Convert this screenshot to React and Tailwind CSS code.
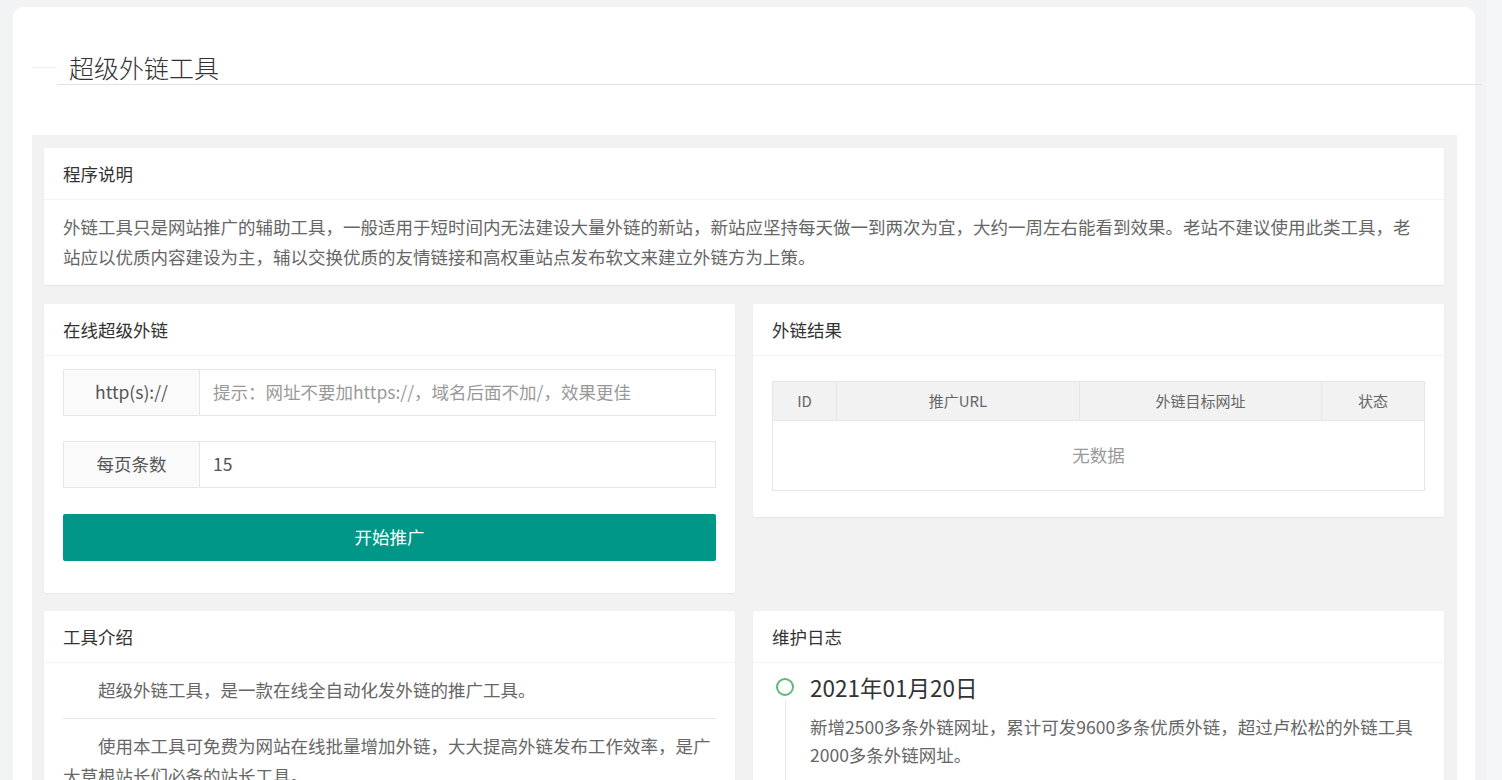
import React from 'react';

const font = { fontFamily: '"Noto Sans CJK SC", "Noto Sans", sans-serif' };

// 卡片：标题 + 内容
const Card = ({ title, children, className = '' }) => (
  <div className={`bg-white rounded-[2px] shadow-[0_1px_2px_0_rgba(0,0,0,0.05)] ${className}`}>
    <div className="h-[52px] leading-[52px] px-[19px] text-[17.5px] text-[#333] border-b border-[#f4f4f4]">
      {title}
    </div>
    {children}
  </div>
);

const InputRow = ({ label, placeholder, value }) => (
  <div className="flex h-[47px]">
    <div className="w-[137px] shrink-0 bg-[#fafafa] border border-[#e6e6e6] flex items-center justify-center text-[17.5px] text-[#555]">
      {label}
    </div>
    <input
      className="flex-1 min-w-0 border border-l-0 border-[#e6e6e6] px-[13px] text-[17.5px] text-[#555] placeholder:text-[#999] outline-none"
      placeholder={placeholder}
      defaultValue={value}
    />
  </div>
);

export default function App() {
  return (
    <div className="min-h-screen bg-[#f2f3f5] flex" style={font}>
      <div className="pl-[13px] pt-[7px] w-[1486px] shrink-0 pr-[11px]">
        <div className="bg-white rounded-[10px] pt-[43px] pb-0">
          {/* 标题 */}
          <div className="flex items-center pl-[19px] mr-[-7px]">
            <div className="w-[25px] h-px bg-[#eeeeee]"></div>
            <div className="flex-1 border-b border-[#e2e2e2] pl-[12px] h-[35px] leading-[34px] text-[25px] font-light text-[#333]">
              超级外链工具
            </div>
          </div>

          <div className="mt-[50px] ml-[19px] mr-[18px] bg-[#f2f2f2] pl-[12px] pr-[13px] pt-[13px] pb-[20px]">
            <Card title="程序说明" className="mb-[19px]">
              <div className="px-[19px] pt-[12px] pb-[13px] text-[17.5px] leading-[30px] text-[#666]">
                外链工具只是网站推广的辅助工具，一般适用于短时间内无法建设大量外链的新站，新站应坚持每天做一到两次为宜，大约一周左右能看到效果。老站不建议使用此类工具，老站应以优质内容建设为主，辅以交换优质的友情链接和高权重站点发布软文来建立外链方为上策。
              </div>
            </Card>

            <div className="grid grid-cols-2 gap-[18px] items-start">
              <Card title="在线超级外链">
                <div className="px-[19px] pt-[13px] pb-[32px] flex flex-col">
                  <InputRow label="http(s)://" placeholder="提示：网址不要加https://，域名后面不加/，效果更佳" />
                  <div className="h-[25px]"></div>
                  <InputRow label="每页条数" value="15" />
                  <button className="mt-[26px] h-[47px] w-full rounded-[2px] bg-[#009688] text-white text-[17.5px]">
                    开始推广
                  </button>
                </div>
              </Card>

              <Card title="外链结果">
                <div className="px-[19px] pt-[25px] pb-[26px]">
                  <div className="border border-[#e6e6e6]">
                    <div className="grid grid-cols-[64px_243px_242px_1fr] h-[39px] bg-[#f2f2f2] border-b border-[#e6e6e6] text-[15px] text-[#666]">
                      <div className="flex items-center justify-center border-r border-[#e6e6e6]">ID</div>
                      <div className="flex items-center justify-center border-r border-[#e6e6e6]">推广URL</div>
                      <div className="flex items-center justify-center border-r border-[#e6e6e6]">外链目标网址</div>
                      <div className="flex items-center justify-center">状态</div>
                    </div>
                    <div className="h-[69px] flex items-center justify-center text-[17.5px] text-[#999]">
                      无数据
                    </div>
                  </div>
                </div>
              </Card>

              <Card title="工具介绍">
                <div className="px-[19px] pt-[12px] pb-[12px] text-[17.5px] leading-[30px] text-[#666]">
                  <p className="indent-[2em]">超级外链工具，是一款在线全自动化发外链的推广工具。</p>
                  <hr className="mt-[13px] mb-[12px] border-0 h-px bg-[#e6e6e6]" />
                  <p className="indent-[2em]">使用本工具可免费为网站在线批量增加外链，大大提高外链发布工作效率，是广大草根站长们必备的站长工具。</p>
                </div>
              </Card>

              <Card title="维护日志">
                <div className="px-[19px] pt-[9px] pb-[12px] flex">
                  <div className="w-[26px] shrink-0 flex flex-col items-center pt-[6px]">
                    <div className="w-[18px] h-[18px] rounded-full border-2 border-[#5FB878]"></div>
                    <div className="flex-1 w-px bg-[#e6e6e6] mt-[5px]"></div>
                  </div>
                  <div className="ml-[12px] pb-[20px]">
                    <div className="text-[22.5px] leading-[30px] text-[#333]">2021年01月20日</div>
                    <p className="mt-[11px] text-[17.5px] leading-[28px] text-[#666]">
                      新增2500多条外链网址，累计可发9600多条优质外链，超过卢松松的外链工具2000多条外链网址。
                    </p>
                  </div>
                </div>
              </Card>
            </div>
          </div>
        </div>
      </div>
      <div className="w-[16px] shrink-0 bg-[#f5f6f8]"></div>
    </div>
  );
}
